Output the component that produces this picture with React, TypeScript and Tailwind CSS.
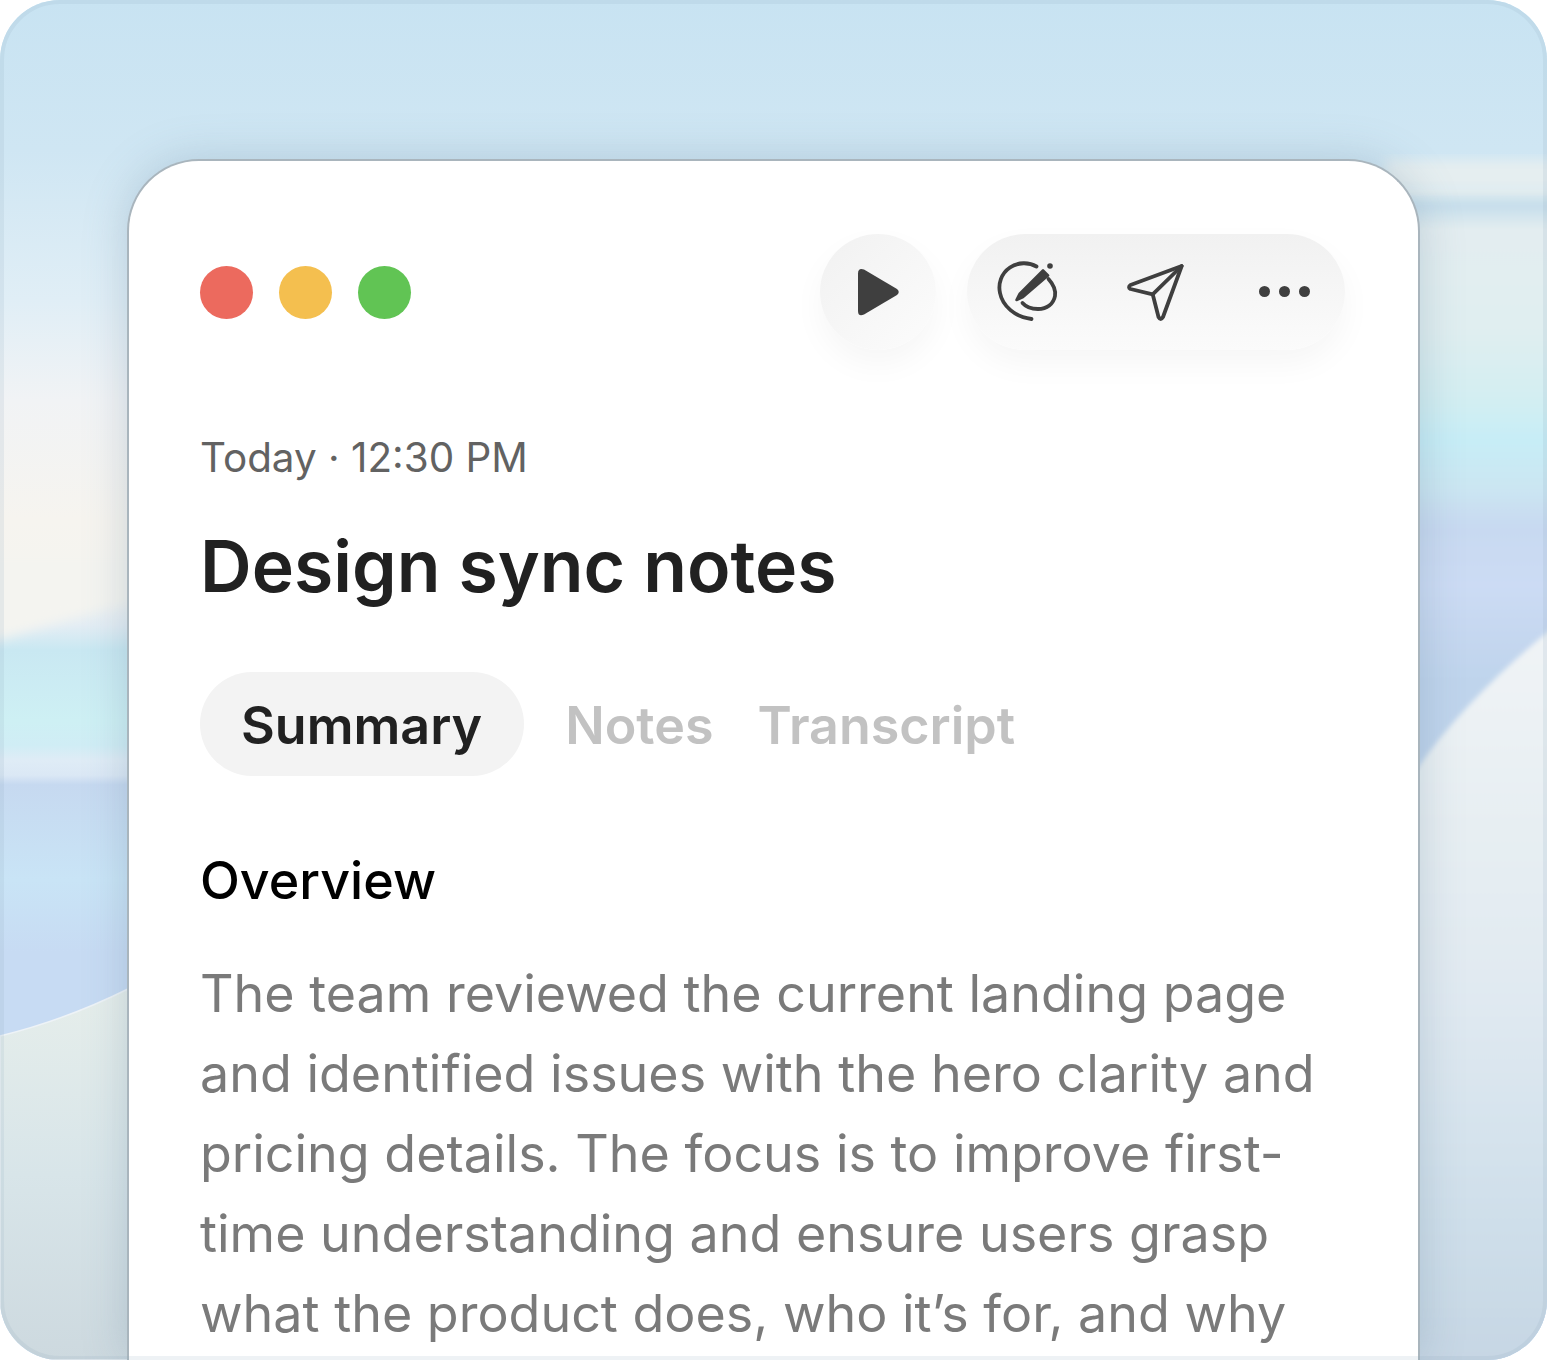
function PlayIcon() {
  return (
    <svg width="80" height="80" viewBox="0 0 80 80" fill="#3f3f3f" className="ml-[3px]">
      <path d="M18 21.5Q18 15.5 24 17.5L57 37Q60.5 40 57 43L24 62.5Q18 65 18 59Z" />
    </svg>
  );
}

function NoteIcon() {
  return (
    <svg width="85" height="80" viewBox="0 0 85 80" fill="none" stroke="#3f3f3f" strokeWidth="3.8" strokeLinecap="round" className="-mt-[2px]">
      <path d="M51.5 15.5C44 11 33 11 25 16.5C16 22.5 13 33 15 42C17.5 55 30 66 46.5 68" />
      <path d="M63.5 28C68 33 71 39 70 45C68.5 53 62 58 53 58C47 58 41 56 37.5 52" />
      <path d="M58 19.5L63 24.5L38 46L31.5 49L34.5 43Z" fill="#3f3f3f" strokeWidth="2.6" strokeLinejoin="round" />
      <circle cx="65" cy="15" r="2.8" fill="#3f3f3f" stroke="none" />
    </svg>
  );
}

function SendIcon() {
  return (
    <svg width="90" height="80" viewBox="0 0 90 80" fill="none" stroke="#3f3f3f" strokeWidth="3.8" strokeLinecap="round" strokeLinejoin="round" className="-mt-[2px]">
      <path d="M71.7 15L20.5 34Q17.5 36.3 20.5 38L42.7 43.3L48.5 66Q50.7 70 53 66Z" />
      <path d="M71.7 15L42.7 43.3" />
    </svg>
  );
}

function Tab({ label }: { label: string }) {
  return <span className="text-[52px] font-semibold leading-[58px] text-[#c2c2c2]">{label}</span>;
}

export default function App() {
  return (
    <div className="relative h-[1360px] w-[1547px] overflow-hidden rounded-[60px] bg-[#cde5f2] font-['Inter',sans-serif]">
      {/* wallpaper */}
      <svg className="absolute inset-0" width="1547" height="1360" viewBox="0 0 1547 1360">
        <defs>
          <linearGradient id="left" x1="0" y1="0" x2="0" y2="1">
            <stop offset="0" stopColor="#c8e3f2" />
            <stop offset="0.11" stopColor="#cfe6f3" />
            <stop offset="0.22" stopColor="#e0eef6" />
            <stop offset="0.294" stopColor="#f1f3f5" />
            <stop offset="0.382" stopColor="#f6f4ef" />
            <stop offset="0.434" stopColor="#f4f4f0" />
            <stop offset="0.46" stopColor="#e3edf4" />
            <stop offset="0.478" stopColor="#c9e8f2" />
            <stop offset="0.53" stopColor="#cef0f4" />
            <stop offset="0.548" stopColor="#d0edf5" />
            <stop offset="0.559" stopColor="#dfecf6" />
            <stop offset="0.57" stopColor="#dbe8f5" />
            <stop offset="0.577" stopColor="#c6d9f0" />
            <stop offset="0.647" stopColor="#c9e4f6" />
            <stop offset="0.7" stopColor="#c7dbf3" />
            <stop offset="1" stopColor="#c7dbf3" />
          </linearGradient>
          <linearGradient id="right" x1="0" y1="0" x2="0" y2="1">
            <stop offset="0" stopColor="#e4eef0" />
            <stop offset="0.015" stopColor="#c6deeb" />
            <stop offset="0.035" stopColor="#e3edf0" />
            <stop offset="0.12" stopColor="#e0eef0" />
            <stop offset="0.18" stopColor="#d3eef2" />
            <stop offset="0.215" stopColor="#c7edf6" />
            <stop offset="0.255" stopColor="#cbe6f2" />
            <stop offset="0.29" stopColor="#c8d9f1" />
            <stop offset="0.34" stopColor="#ccdbf4" />
            <stop offset="0.42" stopColor="#bfd4ec" />
            <stop offset="1" stopColor="#bfd4ec" />
          </linearGradient>
          <linearGradient id="bottomLeft" x1="0" y1="0" x2="0" y2="1">
            <stop offset="0" stopColor="#e6eeeb" />
            <stop offset="0.5" stopColor="#d8e5e9" />
            <stop offset="1" stopColor="#cdd9df" />
          </linearGradient>
          <linearGradient id="bottomRight" x1="0" y1="0" x2="0" y2="1">
            <stop offset="0" stopColor="#f1f4f6" />
            <stop offset="0.2" stopColor="#e9f0f3" />
            <stop offset="0.5" stopColor="#e0e9f1" />
            <stop offset="0.78" stopColor="#cfdfea" />
            <stop offset="1" stopColor="#c5d5e3" />
          </linearGradient>
          <filter id="soft" x="-20%" y="-20%" width="140%" height="140%">
            <feGaussianBlur stdDeviation="6" />
          </filter>
          <filter id="softer" x="-20%" y="-20%" width="140%" height="140%">
            <feGaussianBlur stdDeviation="2.5" />
          </filter>
        </defs>
        <rect x="0" y="0" width="1547" height="1360" fill="url(#left)" />
        <rect x="1400" y="188" width="170" height="1172" fill="url(#right)" filter="url(#softer)" />
        <rect x="1385" y="160" width="180" height="30" fill="#e5eef0" filter="url(#soft)" />
        <path d="M-20 560H140V598L-20 645Z" fill="#f4f4f0" filter="url(#soft)" />
        <path d="M0 1036C45 1025 90 1008 130 988V1360H0Z" fill="url(#bottomLeft)" stroke="#eef3f7" strokeWidth="1.5" />
        <path d="M1560 622C1500 670 1450 720 1415 772V1380H1560Z" fill="url(#bottomRight)" filter="url(#softer)" />
      </svg>

      <div className="absolute left-[127px] top-[159px] h-[1201px] w-[1293px] overflow-hidden rounded-t-[72px] border-x-2 border-t-2 border-[#a9b5bd] bg-white pl-[71px] pr-[73px] shadow-[0_0_44px_rgba(95,125,150,0.28)]">
        <div className="mt-[73px] flex h-[116px] items-center justify-between">
          <div className="flex gap-[26px]">
            <span className="h-[53px] w-[53px] rounded-full bg-[#ec6a5e]" />
            <span className="h-[53px] w-[53px] rounded-full bg-[#f4bf4f]" />
            <span className="h-[53px] w-[53px] rounded-full bg-[#61c454]" />
          </div>
          <div className="flex gap-[31px]">
            <div className="flex h-[116px] w-[116px] items-center justify-center rounded-full bg-gradient-to-br from-[#f1f1f1] to-[#fcfcfc] shadow-[0_14px_32px_rgba(0,0,0,0.04)]">
              <PlayIcon />
            </div>
            <div className="flex h-[116px] w-[378px] items-center rounded-full bg-gradient-to-b from-[#f1f1f1] to-[#fbfbfb] pl-[18px] shadow-[0_14px_32px_rgba(0,0,0,0.04)]">
              <NoteIcon />
              <div className="ml-[40px] flex">
                <SendIcon />
              </div>
              <div className="-mt-[2px] ml-[59px] flex gap-[9px]">
                <span className="h-[11px] w-[11px] rounded-full bg-[#3f3f3f]" />
                <span className="h-[11px] w-[11px] rounded-full bg-[#3f3f3f]" />
                <span className="h-[11px] w-[11px] rounded-full bg-[#3f3f3f]" />
              </div>
            </div>
          </div>
        </div>

        <p className="mt-[80px] text-[40.4px] leading-[56px] text-[#626262]">Today · 12:30 PM</p>
        <h1 className="mt-[36px] text-[71.5px] font-semibold leading-[88px] text-[#212121]">Design sync notes</h1>

        <div className="mt-[62px] flex items-center">
          <span className="rounded-full bg-[#f3f3f3] pb-[21px] pl-[41px] pr-[42px] pt-[25px] text-[52px] font-semibold leading-[58px] text-[#212121]">Summary</span>
          <div className="ml-[41px] mt-[4px] flex gap-[44px]">
            <Tab label="Notes" />
            <Tab label="Transcript" />
          </div>
        </div>

        <h2 className="mt-[74px] text-[52px] font-medium leading-[62px] text-black">Overview</h2>
        <p className="mt-[42px] w-[1130px] text-[52px] leading-[80px] text-[#7a7a7a]">
          The team reviewed the current landing page and identified issues with the hero clarity and pricing details. The focus is to improve first-time understanding and ensure users grasp what the product does, who it’s for, and why
        </p>
      </div>

      <div className="absolute inset-0 rounded-[60px] border-4 border-[#8fa9bb]/15" />
    </div>
  );
}
